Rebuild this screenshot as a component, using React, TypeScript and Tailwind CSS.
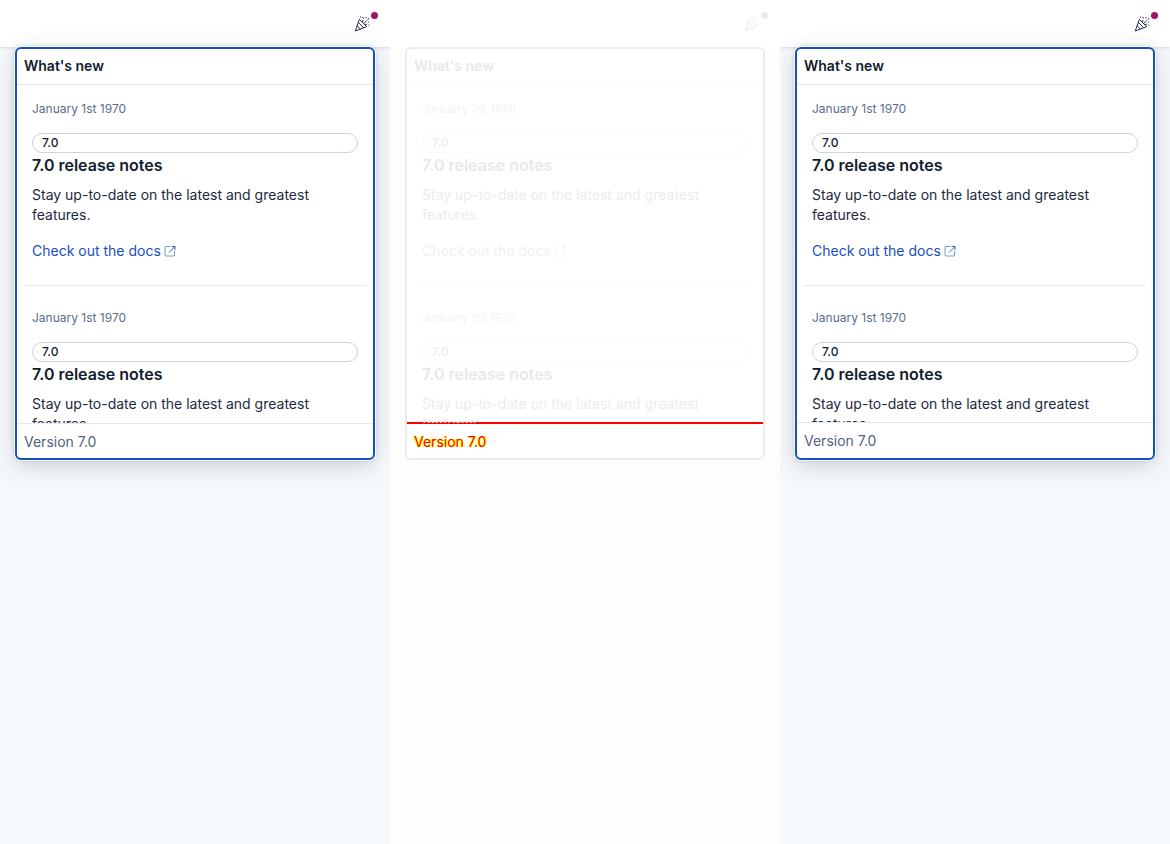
import { clsx } from "clsx";

type Variant = "expected" | "diff" | "actual";

interface Release {
  id: number;
  date: string;
  version: string;
  title: string;
  description: string;
}

const RELEASES: Release[] = [1, 2].map((id) => ({
  id,
  date: "January 1st 1970",
  version: "7.0",
  title: "7.0 release notes",
  description: "Stay up-to-date on the latest and greatest features.",
}));

const VARIANTS: Variant[] = ["expected", "diff", "actual"];

function CheerIcon() {
  return (
    <svg
      className="h-4 w-4"
      viewBox="0 0 16 16"
      fill="none"
      stroke="currentColor"
      strokeLinecap="round"
      strokeLinejoin="round"
      aria-hidden="true"
    >
      {/* striped cone */}
      <path d="M1.4 14.6 5.4 3.4 12.4 10.4Z" strokeWidth=".9" />
      <path d="M4.4 6.4 9.4 11.6M3.1 9.8 6.2 12.8" strokeWidth=".9" />
      {/* confetti */}
      <path
        d="M8.4 5.6 9 4.4M10 7.2 12.4 5M11.6 8.6 12.8 8.2M6.4 1V1.4M8.8 1.2 9.2 2.2M12 1.4V1.8M14.8 2.6 13.8 3.4M14.4 6V6.2M14.8 9V9.2"
        strokeWidth=".9"
      />
    </svg>
  );
}

function PopoutIcon() {
  return (
    <svg className="h-3 w-3" viewBox="0 0 12 12" fill="none" stroke="currentColor" aria-hidden="true">
      <path d="M6 1.5H2a1 1 0 0 0-1 1V10a1 1 0 0 0 1 1h7.5a1 1 0 0 0 1-1V6" opacity=".6" />
      <path d="M7.5 1.5h3.5V5M10.8 1.7 5 7.5" strokeWidth=".9" />
    </svg>
  );
}

function ReleaseItem({ release, diff }: { release: Release; diff: boolean }) {
  return (
    <article className="px-2">
      <p className={clsx("text-xs leading-4", diff ? "text-[#f3f3f3]" : "text-[#5a6d8c]")}>
        {release.date}
      </p>
      <span
        className={clsx(
          "mt-4 block rounded-full border px-[9px] text-xs leading-[18px] font-medium",
          diff ? "border-[#f9f9f9] text-[#ececec]" : "border-[#cad3e2] text-[#111c2c]"
        )}
      >
        {release.version}
      </span>
      <h3 className="text-base leading-6 font-semibold">{release.title}</h3>
      <p className={clsx("mt-2 text-sm leading-5", diff ? "text-[#ececec]" : "text-[#1d2a3e]")}>
        {release.description}
      </p>
      <a
        href="#docs"
        className={clsx(
          "mt-4 flex w-fit items-center gap-[3px] text-sm leading-5",
          diff ? "text-[#f0f0f0]" : "text-[#1750ba]"
        )}
      >
        Check out the docs
        <PopoutIcon />
      </a>
    </article>
  );
}

function NewsFeed({ variant }: { variant: Variant }) {
  const diff = variant === "diff";
  return (
    <section
      className={clsx(
        "mx-[15px] rounded-md border-2 bg-white",
        diff
          ? "border-[#ececec]"
          : "border-[#1750ba] shadow-[0_0_0_1px_#f6f8fb,0_0_4px_rgba(43,57,79,0.25),0_6px_24px_rgba(43,57,79,0.2)]"
      )}
    >
      <h2
        className={clsx(
          "border-b px-[7px] pt-[7px] pb-2 text-sm leading-5 font-semibold",
          diff ? "border-[#fafafa]" : "border-[#e3e8f2]"
        )}
      >
        What&apos;s new
      </h2>
      <div
        className={clsx(
          "overflow-hidden px-[7px] pt-4",
          variant === "actual" ? "h-[337px]" : "h-[338px]"
        )}
      >
        {RELEASES.map((release, i) => (
          <div key={release.id}>
            {i > 0 && (
              <hr className={clsx("my-6", diff ? "border-[#fcfcfc]" : "border-[#e3e8f2]")} />
            )}
            <ReleaseItem release={release} diff={diff} />
          </div>
        ))}
      </div>
      <footer
        className={clsx(
          "px-[7px] pt-2 text-sm leading-5",
          variant === "expected" && "border-t border-[#e3e8f2] pb-1.5 text-[#516381]",
          variant === "actual" && "border-t border-[#e3e8f2] pb-[7px] text-[#516381]",
          diff &&
            "-mt-px border-t-2 border-[#ff0000] pb-1.5 text-[#ff0000] [text-shadow:1px_0_0_#ff0,-1px_0_0_#ff0]"
        )}
      >
        Version 7.0
      </footer>
    </section>
  );
}

function Screen({ variant }: { variant: Variant }) {
  const diff = variant === "diff";
  return (
    <div
      className={clsx(
        "overflow-hidden",
        diff ? "bg-[#fdfdfd] text-[#e9e9e9]" : "bg-[#f6f9fc] text-[#111c2c]"
      )}
    >
      <header
        className={clsx(
          "flex h-[47px] items-center justify-end bg-white px-5",
          !diff && "shadow-[0_1px_3px_rgba(43,57,79,0.16)]"
        )}
      >
        <button type="button" aria-label="What's new" className="relative">
          <CheerIcon />
          <span
            className={clsx(
              "absolute -top-1 -right-2 h-[7px] w-[7px] rounded-full",
              diff ? "bg-[#ebebeb]" : "bg-[#a11262]"
            )}
          />
        </button>
      </header>
      <NewsFeed variant={variant} />
    </div>
  );
}

export default function App() {
  return (
    <main className="grid min-h-screen grid-cols-3 font-[Inter,sans-serif]">
      {VARIANTS.map((variant) => (
        <Screen key={variant} variant={variant} />
      ))}
    </main>
  );
}
